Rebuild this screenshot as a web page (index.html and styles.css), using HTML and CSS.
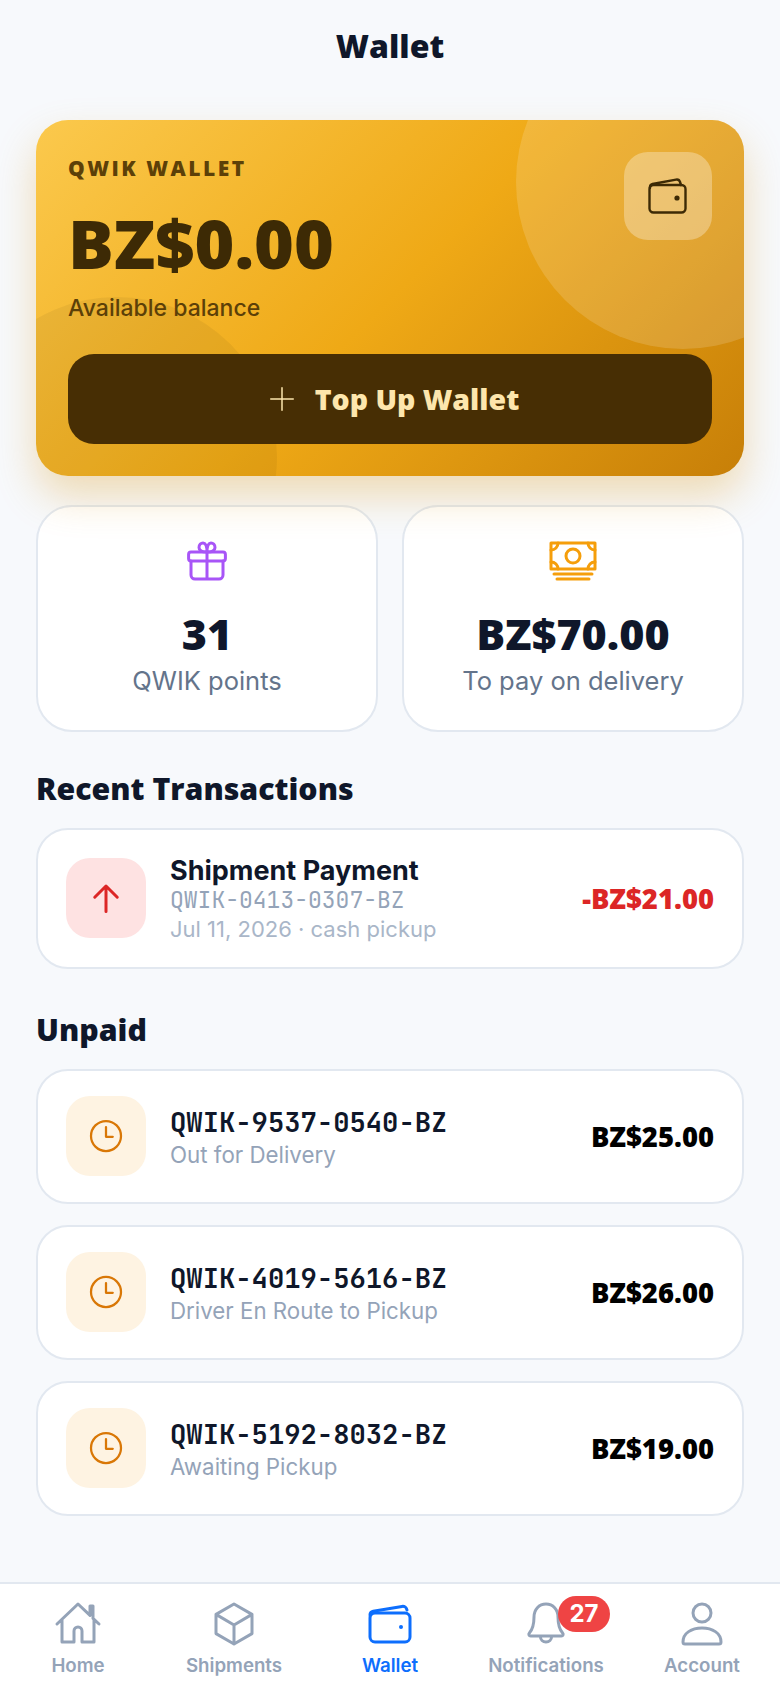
FILE: index.html
```html
<!DOCTYPE html>
<html>
<head>
	<meta charset="utf-8">
	<title>Wallet</title>
	<link rel="stylesheet" href="styles.css">
</head>
<body>
	<h1 class="title">Wallet</h1>
	<main class="content">
		<section class="balance">
			<div class="blob blob-top"></div>
			<div class="blob blob-bottom"></div>
			<div class="balance-head">
				<div>
					<div class="balance-label">QWIK WALLET</div>
					<div class="balance-amount">BZ$0.00</div>
					<div class="balance-note">Available balance</div>
				</div>
				<div class="balance-icon">
					<svg width="40" height="36" viewBox="0 0 40 36" fill="none" stroke="#3d2a05" stroke-width="2.400" stroke-linecap="round" stroke-linejoin="round"><path d="M2 10V9c0-1.500 1-2.500 2.500-3L28 1.600c2-.3 3.500.6 4 2.400l1 3"/><rect x="1.500" y="7" width="36" height="27.500" rx="4"/><circle cx="29" cy="20" r="2.600" fill="#3d2a05" stroke="none"/></svg>
				</div>
			</div>
			<button class="topup">
				<svg width="30" height="30" viewBox="0 0 24 24" fill="none" stroke="#fde6ad" stroke-width="1.200" stroke-linecap="round"><path d="M12 3v18M3 12h18"/></svg>
				<span>Top Up Wallet</span>
			</button>
		</section>

		<section class="stats">
			<div class="stat">
				<svg class="stat-icon" width="48" height="48" viewBox="0 0 24 24" fill="none" stroke="#a855f7" stroke-width="1.500" stroke-linecap="round" stroke-linejoin="round"><path d="M12 7.500V21M4 12v7a2 2 0 0 0 2 2h12a2 2 0 0 0 2-2v-7"/><rect x="2.800" y="7.500" width="18.400" height="4.500" rx="1.200"/><path d="M12 7.500C10.500 7.500 8 7.300 8 5.200 8 3.800 9 3 10 3c1.300 0 2 2 2 4.500zM12 7.500c1.500 0 4-.2 4-2.300C16 3.800 15 3 14 3c-1.300 0-2 2-2 4.500z"/></svg>
				<div class="stat-value">31</div>
				<div class="stat-label">QWIK points</div>
			</div>
			<div class="stat">
				<svg class="stat-icon" width="52" height="48" viewBox="0 0 26 24" fill="none" stroke="#f59e0b" stroke-width="1.500" stroke-linecap="round" stroke-linejoin="round"><rect x="2" y="3" width="22" height="13"/><circle cx="13" cy="9.500" r="3.500"/><path d="M2 6.500C4 6.500 5.500 5 5.500 3M24 6.500C22 6.500 20.500 5 20.500 3M2 12.500C4 12.500 5.500 14 5.500 16M24 12.500C22 12.500 20.500 14 20.500 16M3.500 18.500h19M5 21h16"/></svg>
				<div class="stat-value">BZ$70.00</div>
				<div class="stat-label">To pay on delivery</div>
			</div>
		</section>

		<h2 class="section-title">Recent Transactions</h2>
		<div class="row row-tx">
			<div class="tile tile-red">
				<svg width="36" height="36" viewBox="0 0 24 24" fill="none" stroke="#dc2626" stroke-width="2" stroke-linecap="round" stroke-linejoin="round"><path d="M12 21V4M4.500 11.500 12 4l7.500 7.500"/></svg>
			</div>
			<div class="row-body">
				<div class="row-name">Shipment Payment</div>
				<div class="row-code muted">QWIK-0413-0307-BZ</div>
				<div class="row-date">Jul 11, 2026 · cash pickup</div>
			</div>
			<div class="row-amount red">-BZ$21.00</div>
		</div>

		<h2 class="section-title unpaid-title">Unpaid</h2>
		<div class="row">
			<div class="tile tile-amber">
				<svg width="36" height="36" viewBox="0 0 24 24" fill="none" stroke="#d97706" stroke-width="1.500" stroke-linecap="round" stroke-linejoin="round"><circle cx="12" cy="12" r="10"/><path d="M12 6v6.500h4.500"/></svg>
			</div>
			<div class="row-body">
				<div class="row-code">QWIK-9537-0540-BZ</div>
				<div class="row-status">Out for Delivery</div>
			</div>
			<div class="row-amount">BZ$25.00</div>
		</div>
		<div class="row">
			<div class="tile tile-amber">
				<svg width="36" height="36" viewBox="0 0 24 24" fill="none" stroke="#d97706" stroke-width="1.500" stroke-linecap="round" stroke-linejoin="round"><circle cx="12" cy="12" r="10"/><path d="M12 6v6.500h4.500"/></svg>
			</div>
			<div class="row-body">
				<div class="row-code">QWIK-4019-5616-BZ</div>
				<div class="row-status">Driver En Route to Pickup</div>
			</div>
			<div class="row-amount">BZ$26.00</div>
		</div>
		<div class="row">
			<div class="tile tile-amber">
				<svg width="36" height="36" viewBox="0 0 24 24" fill="none" stroke="#d97706" stroke-width="1.500" stroke-linecap="round" stroke-linejoin="round"><circle cx="12" cy="12" r="10"/><path d="M12 6v6.500h4.500"/></svg>
			</div>
			<div class="row-body">
				<div class="row-code">QWIK-5192-8032-BZ</div>
				<div class="row-status">Awaiting Pickup</div>
			</div>
			<div class="row-amount">BZ$19.00</div>
		</div>
	</main>

	<nav class="tabs">
		<div class="tab">
			<svg width="48" height="48" viewBox="0 0 24 24" fill="none" stroke="#94a3b8" stroke-width="1.500" stroke-linecap="round" stroke-linejoin="round"><path d="M1.500 12 12 2l6 5.700V3h1.500v6.200l3 2.800M4 10v11h6v-5.500a2 2 0 0 1 4 0V21h6V10"/></svg>
			<span>Home</span>
		</div>
		<div class="tab">
			<svg width="48" height="48" viewBox="0 0 24 24" fill="none" stroke="#94a3b8" stroke-width="1.500" stroke-linecap="round" stroke-linejoin="round"><path d="M12 2l9 5.200v9.600L12 22l-9-5.200V7.200zM3 7.200l9 5.300 9-5.300M12 12.500V22"/></svg>
			<span>Shipments</span>
		</div>
		<div class="tab tab-active">
			<svg width="48" height="48" viewBox="0 0 24 24" fill="none" stroke="#0d6efd" stroke-width="1.500" stroke-linecap="round" stroke-linejoin="round"><path d="M2 7.500c0-1 .6-1.700 1.600-1.900L18 3.200c1.300-.2 2.300.6 2.500 1.800"/><rect x="2" y="6.500" width="20" height="14.500" rx="2.500"/><circle cx="17.500" cy="13.500" r="1" fill="#0d6efd" stroke="none"/></svg>
			<span>Wallet</span>
		</div>
		<div class="tab">
			<svg width="48" height="48" viewBox="0 0 24 24" fill="none" stroke="#94a3b8" stroke-width="1.500" stroke-linecap="round" stroke-linejoin="round"><path d="M12 2c-3.500 0-6 2.700-6 6.500 0 4.500-1 6.500-2.300 8-.6.700-.2 1.500.6 1.500h15.400c.8 0 1.200-.8.600-1.500-1.300-1.500-2.300-3.500-2.300-8C18 4.700 15.500 2 12 2zM9.200 18.200a2.800 2.800 0 0 0 5.600 0"/></svg>
			<span>Notifications</span>
			<div class="badge">27</div>
		</div>
		<div class="tab">
			<svg width="48" height="48" viewBox="0 0 24 24" fill="none" stroke="#94a3b8" stroke-width="1.500" stroke-linecap="round" stroke-linejoin="round"><circle cx="12" cy="6.500" r="4.500"/><path d="M2.500 21c0-4.500 4.300-7 9.500-7s9.500 2.500 9.500 7c0 .6-.4 1-1 1h-17c-.6 0-1-.4-1-1z"/></svg>
			<span>Account</span>
		</div>
	</nav>
</body>
</html>
```

FILE: styles.css
```css
*{
	box-sizing: border-box;
}
body{
	margin: 0;
	background: #f7f9fc;
	color: #0f172a;
	font-family: Inter, sans-serif;
	height: 1688px;
	overflow: hidden;
	display: flex;
	flex-direction: column;
}
.title{
	margin: 0;
	padding-top: 24px;
	height: 120px;
	text-align: center;
	font-family: "Open Sans", sans-serif;
	font-size: 32px;
	line-height: 44px;
	font-weight: 800;
}
.content{
	flex: 1;
	padding: 0 36px;
}
.balance{
	position: relative;
	overflow: hidden;
	height: 356px;
	padding: 32px;
	border-radius: 32px;
	background: linear-gradient(135deg, #fbc94d 0%, #efa916 50%, #c77f08 100%);
	box-shadow: 0 20px 40px rgba(217,150,20,.3);
}
.blob{
	position: absolute;
	border-radius: 50%;
}
.blob-top{
	top: -105px;
	right: -106px;
	width: 334px;
	height: 334px;
	background: rgba(255,255,255,.15);
}
.blob-bottom{
	top: 177px;
	left: -79px;
	width: 320px;
	height: 320px;
	background: rgba(0,0,0,.05);
}
.balance-head{
	position: relative;
	display: flex;
	justify-content: space-between;
	height: 202px;
}
.balance-label{
	font-family: "Open Sans", sans-serif;
	font-size: 21px;
	line-height: 28px;
	font-weight: 800;
	letter-spacing: 2.500px;
	color: #5c4008;
	margin-top: 2px;
}
.balance-amount{
	margin-top: 19px;
	font-family: "Open Sans", sans-serif;
	font-size: 68px;
	line-height: 84px;
	font-weight: 800;
	color: #3d2a05;
}
.balance-note{
	margin-top: 8px;
	font-size: 23px;
	line-height: 30px;
	font-weight: 500;
	color: #5c4008;
}
.balance-icon{
	width: 88px;
	height: 88px;
	border-radius: 24px;
	background: rgba(255,255,255,.3);
	display: flex;
	align-items: center;
	justify-content: center;
}
.topup{
	position: relative;
	width: 100%;
	height: 90px;
	padding: 0 0 0 6px;
	border: 0;
	border-radius: 26px;
	background: #472e04;
	color: #fde6ad;
	font-family: "Open Sans", sans-serif;
	font-size: 28.500px;
	font-weight: 800;
	display: flex;
	align-items: center;
	justify-content: center;
	gap: 18px;
}
.stats{
	display: grid;
	grid-template-columns: 1fr 1fr;
	gap: 24px;
	margin-top: 29px;
}
.stat{
	height: 227px;
	background: #fff;
	border: 2px solid #e2e8f0;
	border-radius: 36px;
	padding-top: 30px;
	text-align: center;
}
.stat-icon{
	display: block;
	margin: 0 auto;
}
.stat-value{
	margin-top: 23px;
	font-family: "Open Sans", sans-serif;
	font-size: 43px;
	line-height: 52px;
	font-weight: 800;
}
.stat-label{
	margin-top: 3px;
	font-size: 25.500px;
	line-height: 36px;
	color: #64748b;
}
.section-title{
	margin: 36px 0 18px;
	font-family: "Open Sans", sans-serif;
	font-size: 30.300px;
	line-height: 42px;
	font-weight: 800;
}
.unpaid-title{
	margin-top: 40px;
}
.row{
	display: flex;
	align-items: center;
	gap: 24px;
	height: 135px;
	margin-bottom: 21px;
	padding: 0 28px;
	background: #fff;
	border: 2px solid #e2e8f0;
	border-radius: 32px;
}
.row-tx{
	height: 141px;
}
.tile{
	flex: none;
	width: 80px;
	height: 80px;
	margin-top: -2px;
	border-radius: 24px;
	display: flex;
	align-items: center;
	justify-content: center;
}
.tile-red{
	background: #fee2e2;
}
.tile-amber{
	background: #fef3e2;
}
.row-body{
	flex: 1;
	min-width: 0;
}
.row-tx .row-body{
	padding-top: 2px;
}
.row-name{
	font-size: 27px;
	line-height: 30px;
	font-weight: 700;
}
.row-code{
	font-family: "JetBrains Mono", monospace;
	font-size: 27.200px;
	line-height: 36px;
	font-weight: 700;
}
.row-code.muted{
	font-size: 23px;
	line-height: 28px;
	font-weight: 400;
	color: #94a3b8;
}
.row-date{
	font-size: 22px;
	line-height: 30px;
	color: #a9b6c8;
}
.row-status{
	font-size: 22.300px;
	line-height: 30px;
	color: #94a3b8;
}
.row-amount{
	font-family: "Open Sans", sans-serif;
	font-size: 27.400px;
	font-weight: 800;
	color: #000;
}
.row-amount.red{
	color: #dc2626;
}
.tabs{
	flex: none;
	display: grid;
	grid-template-columns: repeat(5, 1fr);
	height: 106px;
	background: #fff;
	border-top: 2px solid #e2e8f0;
	padding-top: 16px;
}
.tab{
	position: relative;
	display: flex;
	flex-direction: column;
	align-items: center;
	font-size: 18.700px;
	line-height: 28px;
	font-weight: 600;
	color: #94a3b8;
}
.tab svg{
	margin-bottom: 4px;
}
.tab-active{
	color: #0d6efd;
}
.badge{
	position: absolute;
	top: -4px;
	left: 90px;
	width: 52px;
	height: 36px;
	border-radius: 18px;
	background: #ef4444;
	color: #fff;
	font-size: 24px;
	line-height: 36px;
	font-weight: 700;
	text-align: center;
}
```
